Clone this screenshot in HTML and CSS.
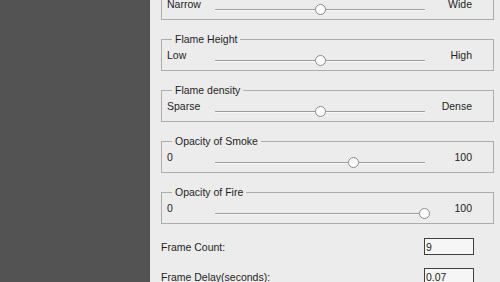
FILE: index.html
```html
<!DOCTYPE html>
<html lang="en">
<head>
    <meta charset="UTF-8">
    <meta name="viewport" content="width=device-width, initial-scale=1.0">
    <title>Fire Effect Settings</title>
    <link rel="stylesheet" href="styles.css">
</head>
<body>
    <div class="app">
        <aside class="sidebar"></aside>
        <main class="panel">
            <div class="settings">
                <fieldset class="group">
                    <legend>Flame Width</legend>
                    <div class="slider-row">
                        <span class="min">Narrow</span>
                        <input type="range" min="0" max="100" value="50">
                        <span class="max">Wide</span>
                    </div>
                </fieldset>

                <fieldset class="group">
                    <legend>Flame Height</legend>
                    <div class="slider-row">
                        <span class="min">Low</span>
                        <input type="range" min="0" max="100" value="50">
                        <span class="max">High</span>
                    </div>
                </fieldset>

                <fieldset class="group">
                    <legend>Flame density</legend>
                    <div class="slider-row">
                        <span class="min">Sparse</span>
                        <input type="range" min="0" max="100" value="50">
                        <span class="max">Dense</span>
                    </div>
                </fieldset>

                <fieldset class="group">
                    <legend>Opacity of Smoke</legend>
                    <div class="slider-row">
                        <span class="min">0</span>
                        <input type="range" min="0" max="100" value="66">
                        <span class="max">100</span>
                    </div>
                </fieldset>

                <fieldset class="group">
                    <legend>Opacity of Fire</legend>
                    <div class="slider-row">
                        <span class="min">0</span>
                        <input type="range" min="0" max="100" value="100">
                        <span class="max">100</span>
                    </div>
                </fieldset>

                <div class="fields">
                    <div class="field-row">
                        <label for="frame-count">Frame Count:</label>
                        <input type="text" id="frame-count" value="9">
                    </div>
                    <div class="field-row">
                        <label for="frame-delay">Frame Delay(seconds):</label>
                        <input type="text" id="frame-delay" value="0.07">
                    </div>
                </div>
            </div>
        </main>
    </div>
</body>
</html>
```

FILE: styles.css
```css
body {
    margin: 0;
    font-family: "Liberation Sans", Arial, sans-serif;
    font-size: 10.5px;
    color: #1e1e1e;
}
.app {
    display: flex;
    height: 100vh;
    overflow: hidden;
}
.sidebar {
    flex: none;
    width: 150px;
    background: #535353;
}
.panel {
    flex: 1;
    background: #ececec;
    padding: 0 6px 0 11px;
    overflow: hidden;
}
.settings {
    margin-top: -18px;
}
.group {
    margin: 0 0 13px;
    padding: 0 21px 0 5px;
    border: 1px solid #adadad;
    min-width: 0;
}
.group legend {
    margin-left: 5px;
    padding: 0 3px;
    line-height: 13px;
}
.slider-row {
    display: grid;
    grid-template-columns: 43px 220px 1fr;
    align-items: start;
    height: 24px;
}
.slider-row .min {
    padding-top: 3px;
    line-height: 13px;
}
.slider-row .max {
    padding-top: 3px;
    line-height: 13px;
    text-align: right;
}
input[type="range"] {
    -webkit-appearance: none;
    appearance: none;
    width: 220px;
    height: 11px;
    margin: 9px 0 0;
    background: transparent;
}
input[type="range"]::-webkit-slider-runnable-track {
    height: 11px;
    background: linear-gradient(#9c9c9c 50%, #fafafa 50%) center / calc(100% - 10px) 2px no-repeat;
}
input[type="range"]::-webkit-slider-thumb {
    -webkit-appearance: none;
    box-sizing: border-box;
    width: 11px;
    height: 11px;
    border: 1px solid #8a8a8a;
    border-radius: 50%;
    background: #fff;
}
.fields {
    padding-top: 1px;
}
.field-row {
    display: flex;
    justify-content: space-between;
    align-items: center;
    height: 17px;
    margin-bottom: 13px;
}
.field-row input {
    box-sizing: border-box;
    width: 50px;
    height: 17px;
    margin-right: 20px;
    padding: 0 1px;
    border: 1px solid #3f3f3f;
    background: #f6f6f6;
    font: inherit;
    color: #1e1e1e;
}
```
